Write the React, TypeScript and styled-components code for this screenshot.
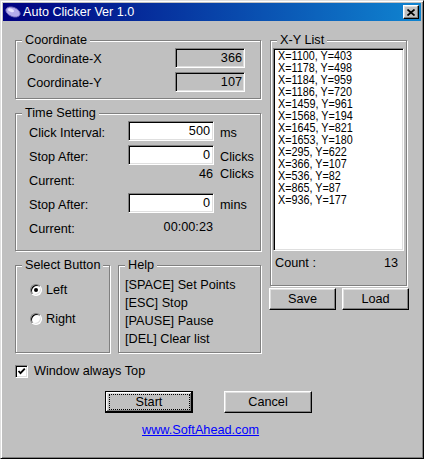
import React from 'react';
import styled, { createGlobalStyle } from 'styled-components';

// list of recorded points
const points = [
  'X=1100, Y=403',
  'X=1178, Y=498',
  'X=1184, Y=959',
  'X=1186, Y=720',
  'X=1459, Y=961',
  'X=1568, Y=194',
  'X=1645, Y=821',
  'X=1653, Y=180',
  'X=295, Y=622',
  'X=366, Y=107',
  'X=536, Y=82',
  'X=865, Y=87',
  'X=936, Y=177'
];

const helpLines = ['[SPACE] Set Points', '[ESC] Stop', '[PAUSE] Pause', '[DEL] Clear list'];

const GlobalStyle = createGlobalStyle`
  html, body {
    margin: 0;
    padding: 0;
    background: #c0c0c0;
  }
  body {
    font-family: 'Liberation Sans', Arial, sans-serif;
    font-size: 12px;
  }
`;

const Window = styled.div`
  box-sizing: border-box;
  width: 424px;
  height: 459px;
  background: #c0c0c0;
  border: 1px solid;
  border-color: #dfdfdf #000 #000 #dfdfdf;
  box-shadow: inset 1px 1px #fff, inset -1px -1px #808080;
  padding: 2px;
  display: flex;
  flex-direction: column;
  color: #000;
  font: 12.7px 'Liberation Sans', Arial, sans-serif;
`;

const TitleBar = styled.div`
  height: 18px;
  flex: none;
  display: flex;
  align-items: center;
  gap: 2px;
  padding: 0 2px;
  background: linear-gradient(to right, #000080, #1084d0);
`;

const TitleText = styled.span`
  color: #fff;
  font-size: 12.6px;
  line-height: 14px;
  white-space: nowrap;
`;

const CloseButton = styled.div`
  box-sizing: border-box;
  width: 16px;
  height: 14px;
  margin-left: auto;
  background: #c0c0c0;
  border: 1px solid;
  border-color: #fff #000 #000 #fff;
  box-shadow: inset -1px -1px #808080, inset 1px 1px #dfdfdf;
  display: flex;
  align-items: center;
  justify-content: center;
`;

const Client = styled.div`
  display: flex;
  flex-direction: column;
  padding: 19px 0 0 12px;
`;

const TopGrid = styled.div`
  display: grid;
  grid-template-columns: 246px 140px;
  column-gap: 9px;
  align-items: start;
`;

const Column = styled.div`
  display: flex;
  flex-direction: column;
  gap: 14px;
`;

const Group = styled.div<{ $h: number; $w?: number }>`
  position: relative;
  box-sizing: border-box;
  height: ${({ $h }) => $h}px;
  width: ${({ $w }) => ($w ? `${$w}px` : 'auto')};
  flex: ${({ $w }) => ($w ? 'none' : '1 0 auto')};
  border: 1px solid #808080;
  box-shadow: 1px 1px 0 #fff, inset 1px 1px 0 #fff;
`;

const Legend = styled.span`
  position: absolute;
  top: -8px;
  left: 6px;
  padding: 0 3px;
  background: #c0c0c0;
  line-height: 14px;
  white-space: nowrap;
`;

const CoordGrid = styled.div`
  display: grid;
  grid-template-columns: 148px 70px;
  grid-auto-rows: 20px;
  row-gap: 4px;
  padding: 7px 0 0 11px;
`;

const TimeGrid = styled.div`
  display: grid;
  grid-template-columns: 93px 86px auto;
  grid-auto-rows: 20px;
  column-gap: 6px;
  row-gap: 4px;
  padding: 7px 0 0 13px;
`;

const Label = styled.span<{ $dy?: number }>`
  line-height: 14px;
  white-space: nowrap;
  align-self: start;
  margin-top: ${({ $dy }) => $dy ?? 5}px;
`;

const Value = styled(Label)`
  text-align: right;
  padding-right: 1px;
`;

const Field = styled.div<{ $white?: boolean }>`
  box-sizing: border-box;
  height: 20px;
  background: ${({ $white }) => ($white ? '#fff' : '#c0c0c0')};
  border: 1px solid;
  border-color: #808080 #fff #fff #808080;
  box-shadow: inset 1px 1px #000, inset -1px -1px #dfdfdf;
  text-align: right;
  padding: 0 ${({ $white }) => ($white ? 3 : 2)}px 0 0;
  line-height: 18px;
`;

const BottomRow = styled.div`
  display: flex;
  gap: 8px;
`;

const RadioList = styled.div`
  display: flex;
  flex-direction: column;
  gap: 15px;
  padding: 17px 0 0 14px;
`;

const OptionRow = styled.div`
  display: flex;
  align-items: center;
  gap: 4px;
  line-height: 14px;
`;

const Radio = styled.span<{ $on?: boolean }>`
  position: relative;
  box-sizing: border-box;
  width: 12px;
  height: 12px;
  border-radius: 50%;
  background: #fff;
  border: 1px solid;
  border-color: #808080 #fff #fff #808080;
  box-shadow: inset 1px 1px #000, inset -1px -1px #dfdfdf;

  &::after {
    content: '';
    display: ${({ $on }) => ($on ? 'block' : 'none')};
    position: absolute;
    left: 3px;
    top: 3px;
    width: 4px;
    height: 4px;
    border-radius: 50%;
    background: #000;
  }
`;

const HelpList = styled.div`
  display: flex;
  flex-direction: column;
  padding: 10px 0 0 6px;
  line-height: 18px;
  white-space: nowrap;
`;

const XYBody = styled.div`
  display: flex;
  flex-direction: column;
  padding: 7px 8px 0 2px;
`;

const ListBox = styled.div`
  box-sizing: border-box;
  width: 131px;
  height: 203px;
  background: #fff;
  border: 1px solid;
  border-color: #808080 #fff #fff #808080;
  box-shadow: inset 1px 1px #000, inset -1px -1px #dfdfdf;
  padding: 1px 0 0 4px;
  overflow: hidden;
`;

const ListText = styled.div`
  font-size: 12.7px;
  line-height: 12px;
  white-space: nowrap;
  transform: scaleX(0.85);
  transform-origin: left top;
`;

const CountRow = styled.div`
  display: flex;
  justify-content: space-between;
  margin-top: 5px;
  padding-left: 2px;
  line-height: 14px;
`;

const SmallButtons = styled.div`
  display: flex;
  gap: 6px;
  margin: 2px 0 0 -1px;
`;

const Button = styled.button<{ $w: number; $default?: boolean }>`
  position: relative;
  box-sizing: border-box;
  width: ${({ $w }) => $w}px;
  height: 22px;
  padding: 0;
  font: inherit;
  color: #000;
  background: #c0c0c0;
  border: 1px solid;
  border-color: ${({ $default }) => ($default ? '#000' : '#fff #000 #000 #fff')};
  box-shadow: ${({ $default }) =>
    $default
      ? 'inset -1px -1px #000, inset 1px 1px #fff, inset -2px -2px #808080, inset 2px 2px #dfdfdf'
      : 'inset -1px -1px #808080, inset 1px 1px #dfdfdf'};

  &::after {
    content: '';
    display: ${({ $default }) => ($default ? 'block' : 'none')};
    position: absolute;
    inset: 2px 2px 2px 3px;
    border: 1px dotted #000;
  }
`;

const CheckRow = styled.div`
  display: flex;
  align-items: center;
  gap: 6px;
  margin-top: 11px;
  line-height: 14px;
`;

const CheckBox = styled.span`
  box-sizing: border-box;
  width: 13px;
  height: 13px;
  background: #fff;
  border: 1px solid;
  border-color: #808080 #fff #fff #808080;
  box-shadow: inset 1px 1px #000, inset -1px -1px #dfdfdf;
  display: flex;
  align-items: center;
  justify-content: center;
`;

const MainButtons = styled.div`
  display: flex;
  gap: 31px;
  margin: 13px 0 0 90px;
`;

const Link = styled.a`
  align-self: flex-start;
  margin: 10px 0 0 127px;
  color: #0000ff;
  text-decoration: underline;
  line-height: 14px;
`;

const AppIcon = () => (
  <svg width="16" height="14" viewBox="0 0 16 14">
    <ellipse cx="8" cy="7" rx="7.5" ry="4.6" transform="rotate(22 8 7)" fill="#b4acec" stroke="#6c64b4" strokeWidth="0.8" />
    <ellipse cx="6" cy="5.2" rx="3.2" ry="1.6" transform="rotate(22 6 5.2)" fill="#e8e4ff" />
  </svg>
);

const App: React.FC = () => {
  return (
    <>
      <GlobalStyle />
      <Window>
        <TitleBar>
          <AppIcon />
          <TitleText>Auto Clicker Ver 1.0</TitleText>
          <CloseButton>
            <svg width="8" height="7" viewBox="0 0 8 7">
              <path d="M0.5 0.5 L7.5 6.5 M7.5 0.5 L0.5 6.5" stroke="#000" strokeWidth="1.7" />
            </svg>
          </CloseButton>
        </TitleBar>

        <Client>
          <TopGrid>
            <Column>
              {/* Coordinate */}
              <Group $h={59}>
                <Legend>Coordinate</Legend>
                <CoordGrid>
                  <Label $dy={4}>Coordinate-X</Label>
                  <Field>366</Field>
                  <Label $dy={4}>Coordinate-Y</Label>
                  <Field>107</Field>
                </CoordGrid>
              </Group>

              {/* Time Setting */}
              <Group $h={138}>
                <Legend>Time Setting</Legend>
                <TimeGrid>
                  <Label>Click Interval:</Label>
                  <Field $white>500</Field>
                  <Label>ms</Label>

                  <Label>Stop After:</Label>
                  <Field $white>0</Field>
                  <Label>Clicks</Label>

                  <Label>Current:</Label>
                  <Value $dy={-2}>46</Value>
                  <Label $dy={-2}>Clicks</Label>

                  <Label>Stop After:</Label>
                  <Field $white>0</Field>
                  <Label>mins</Label>

                  <Label>Current:</Label>
                  <Value $dy={3}>00:00:23</Value>
                  <span />
                </TimeGrid>
              </Group>

              <BottomRow>
                <Group $h={88} $w={95}>
                  <Legend>Select Button</Legend>
                  <RadioList>
                    <OptionRow>
                      <Radio $on />
                      <span>Left</span>
                    </OptionRow>
                    <OptionRow>
                      <Radio />
                      <span>Right</span>
                    </OptionRow>
                  </RadioList>
                </Group>
                <Group $h={88}>
                  <Legend>Help</Legend>
                  <HelpList>
                    {helpLines.map((line) => (
                      <span key={line}>{line}</span>
                    ))}
                  </HelpList>
                </Group>
              </BottomRow>
            </Column>

            <div>
              <Group $h={246} $w={137}>
                <Legend>X-Y List</Legend>
                <XYBody>
                  <ListBox>
                    <ListText>
                      {points.map((p) => (
                        <div key={p}>{p}</div>
                      ))}
                    </ListText>
                  </ListBox>
                  <CountRow>
                    <span>Count :</span>
                    <span>13</span>
                  </CountRow>
                </XYBody>
              </Group>
              <SmallButtons>
                <Button $w={67}>Save</Button>
                <Button $w={67}>Load</Button>
              </SmallButtons>
            </div>
          </TopGrid>

          <CheckRow>
            <CheckBox>
              <svg width="9" height="9" viewBox="0 0 9 9">
                <path d="M1.5 4 L3.5 6.2 L7.8 1.6" stroke="#000" strokeWidth="1.8" fill="none" />
              </svg>
            </CheckBox>
            <span>Window always Top</span>
          </CheckRow>

          <MainButtons>
            <Button $w={88} $default>
              Start
            </Button>
            <Button $w={88}>Cancel</Button>
          </MainButtons>

          <Link href="#">www.SoftAhead.com</Link>
        </Client>
      </Window>
    </>
  );
};

export default App;
